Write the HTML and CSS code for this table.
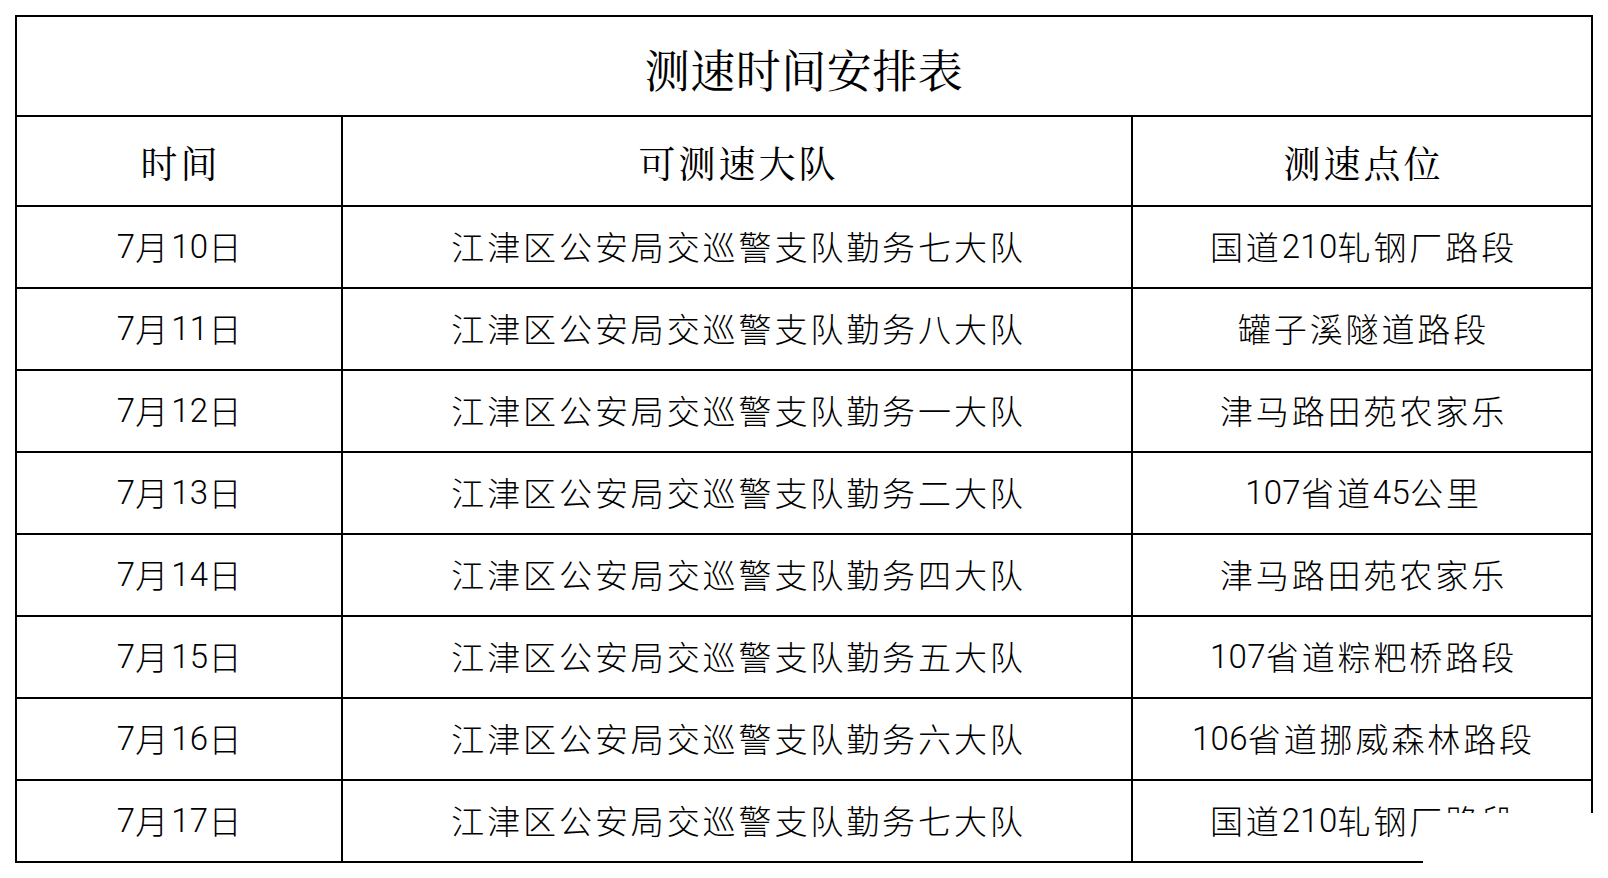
FILE: index.html
```html
<!DOCTYPE html>
<html lang="zh-CN">
<head>
<meta charset="utf-8">
<title>测速时间安排表</title>
<link rel="stylesheet" href="styles.css">
</head>
<body>
<div class="sheet">
  <div class="cell title">测速时间安排表</div>
  <div class="cell head">时间</div>
  <div class="cell head">可测速大队</div>
  <div class="cell head">测速点位</div>

  <div class="cell data"><span class="num">7</span>月<span class="num">10</span>日</div>
  <div class="cell data">江津区公安局交巡警支队勤务七大队</div>
  <div class="cell data">国道<span class="num">210</span>轧钢厂路段</div>

  <div class="cell data"><span class="num">7</span>月<span class="num">11</span>日</div>
  <div class="cell data">江津区公安局交巡警支队勤务八大队</div>
  <div class="cell data">罐子溪隧道路段</div>

  <div class="cell data"><span class="num">7</span>月<span class="num">12</span>日</div>
  <div class="cell data">江津区公安局交巡警支队勤务一大队</div>
  <div class="cell data">津马路田苑农家乐</div>

  <div class="cell data"><span class="num">7</span>月<span class="num">13</span>日</div>
  <div class="cell data">江津区公安局交巡警支队勤务二大队</div>
  <div class="cell data"><span class="num">107</span>省道<span class="num">45</span>公里</div>

  <div class="cell data"><span class="num">7</span>月<span class="num">14</span>日</div>
  <div class="cell data">江津区公安局交巡警支队勤务四大队</div>
  <div class="cell data">津马路田苑农家乐</div>

  <div class="cell data"><span class="num">7</span>月<span class="num">15</span>日</div>
  <div class="cell data">江津区公安局交巡警支队勤务五大队</div>
  <div class="cell data"><span class="num">107</span>省道粽粑桥路段</div>

  <div class="cell data"><span class="num">7</span>月<span class="num">16</span>日</div>
  <div class="cell data">江津区公安局交巡警支队勤务六大队</div>
  <div class="cell data"><span class="num">106</span>省道挪威森林路段</div>

  <div class="cell data"><span class="num">7</span>月<span class="num">17</span>日</div>
  <div class="cell data">江津区公安局交巡警支队勤务七大队</div>
  <div class="cell data">国道<span class="num">210</span>轧钢厂路段</div>

  <div class="mask mask-a"></div>
  <div class="mask mask-b"></div>
</div>
</body>
</html>
```
FILE: styles.css
```css
html, body {
  margin: 0;
  padding: 0;
  background: #ffffff;
}

body {
  width: 1608px;
  height: 878px;
  overflow: hidden;
}

.sheet {
  position: relative;
  box-sizing: border-box;
  margin: 15px 0 0 15px;
  width: 1578px;
  padding: 2px;
  background: #000000;
  display: grid;
  grid-template-columns: 324px 788px 458px;
  grid-template-rows: 98px 88px repeat(8, 80px);
  gap: 2px;
}

.cell {
  background: #ffffff;
  color: #000000;
  display: flex;
  align-items: center;
  justify-content: center;
  white-space: nowrap;
  line-height: 1;
}

.title {
  grid-column: 1 / -1;
  font-family: "Noto Serif CJK SC", "Noto Sans CJK SC", serif;
  font-size: 45px;
  padding-top: 4px;
  letter-spacing: 0.5px;
}

.head {
  font-family: "Noto Serif CJK SC", "Noto Sans CJK SC", serif;
  font-size: 37px;
  padding-top: 3px;
  padding-left: 3px;
  letter-spacing: 3px;
}

.data {
  font-family: "Noto Sans CJK SC", sans-serif;
  font-weight: 300;
  font-size: 33px;
  letter-spacing: 2.9px;
  padding-left: 3px;
  padding-bottom: 2px;
}

.num {
  font-family: Roboto, "Liberation Sans", sans-serif;
  font-weight: 300;
  letter-spacing: 0.3px;
}

.mask {
  position: absolute;
  background: #ffffff;
  right: -20px;
  bottom: -20px;
}

.mask-a {
  left: 1431px;
  top: 798px;
}

.mask-b {
  left: 1408px;
  top: 830px;
}
```
